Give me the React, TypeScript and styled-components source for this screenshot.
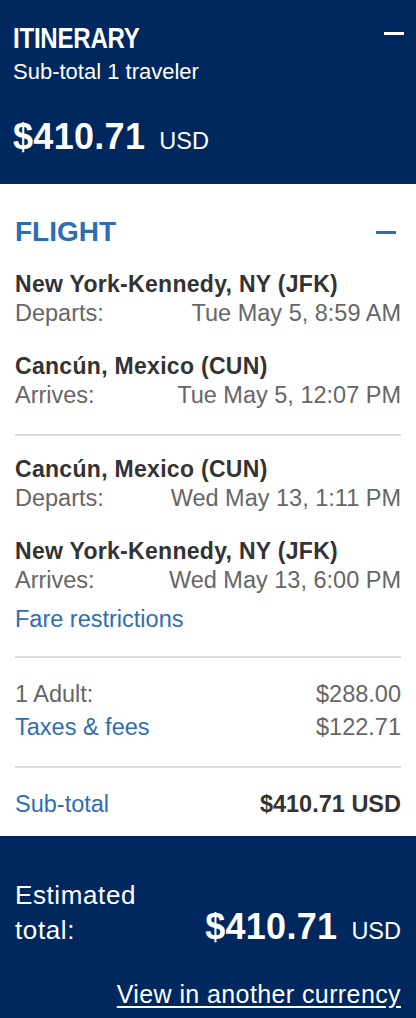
import React from 'react';
import styled, { createGlobalStyle } from 'styled-components';

const navy = '#00285e';
const blue = '#2f6db3';

const GlobalStyle = createGlobalStyle`
	html, body {
		margin: 0;
		padding: 0;
		background: #ffffff;
		font-family: 'Liberation Sans', Arial, sans-serif;
	}
	* {
		box-sizing: border-box;
	}
`;

const Page = styled.div`
	width: 416px;
	min-height: 1018px;
	display: flex;
	flex-direction: column;
	background: #ffffff;
`;

const Header = styled.header`
	background: ${navy};
	color: #ffffff;
	height: 184px;
	padding: 22px 12px 0 13px;
`;

const HeaderTop = styled.div`
	display: flex;
	justify-content: space-between;
	align-items: flex-start;
`;

// the original uses a condensed bold face, squeeze the regular one
const Title = styled.h1`
	margin: 0;
	font-size: 29px;
	line-height: 32px;
	font-weight: 700;
	letter-spacing: -0.3px;
	transform: scaleX(0.83);
	transform-origin: left center;
`;

const Minus = styled.span<{ $light?: boolean }>`
	display: block;
	width: 20px;
	height: 3px;
	margin-top: ${({ $light }) => ($light ? '10px' : '17px')};
	margin-right: ${({ $light }) => ($light ? '0' : '5px')};
	background: ${({ $light }) => ($light ? '#ffffff' : blue)};
`;

const SubTitle = styled.div`
	margin-top: 4px;
	font-size: 22px;
	line-height: 28px;
`;

const Price = styled.div`
	display: flex;
	align-items: baseline;
	gap: 14px;
	line-height: 40px;
`;

const HeaderPrice = styled(Price)`
	margin-top: 31px;
`;

const BigAmount = styled.span`
	font-size: 36px;
	font-weight: 700;
	letter-spacing: 0.3px;
`;

const Currency = styled.span`
	font-size: 23.5px;
`;

const Body = styled.section`
	padding: 30px 15px 0;
	flex: 1;
`;

const SectionHead = styled.div`
	display: flex;
	justify-content: space-between;
	align-items: flex-start;
	margin-bottom: 20px;
`;

const SectionTitle = styled.h2`
	margin: 0;
	color: ${blue};
	font-size: 28px;
	line-height: 36px;
	font-weight: 700;
`;

const Stop = styled.div`
	& + & {
		margin-top: 24px;
	}
`;

const Place = styled.div`
	color: #333333;
	font-size: 23px;
	line-height: 28px;
	font-weight: 700;
	letter-spacing: 0.3px;
`;

const Row = styled.div`
	display: flex;
	justify-content: space-between;
	font-size: 23.5px;
	line-height: 30px;
	color: #666666;
`;

const LinkText = styled.span`
	color: ${blue};
`;

const Divider = styled.hr<{ $top: number }>`
	margin: ${({ $top }) => $top}px 0 0;
	border: none;
	border-top: 2px solid #dddddd;
`;

const Leg = styled.div<{ $top: number }>`
	margin-top: ${({ $top }) => $top}px;
`;

const FareLink = styled.div`
	margin-top: 9px;
	color: ${blue};
	font-size: 23.5px;
	line-height: 30px;
`;

const Costs = styled.div`
	padding-top: 21px;
	display: flex;
	flex-direction: column;
	gap: 3px;
`;

const SubtotalRow = styled(Row)`
	margin-top: 21px;
`;

const Strong = styled.span`
	color: #333333;
	font-weight: 700;
`;

const Footer = styled.footer`
	background: ${navy};
	color: #ffffff;
	height: 182px;
	padding: 42px 15px 0;
`;

const TotalRow = styled.div`
	display: flex;
	justify-content: space-between;
	align-items: last baseline;
`;

const TotalLabel = styled.div`
	font-size: 26px;
	line-height: 35px;
	width: 130px;
	letter-spacing: 0.6px;
`;

const CurrencyLink = styled.a`
	display: block;
	text-align: right;
	color: #ffffff;
	font-size: 25px;
	line-height: 30px;
	margin-top: 28px;
	text-decoration: underline;
	text-underline-offset: 3px;
	letter-spacing: 0.4px;
`;

type LegInfo = {
	from: string;
	to: string;
	depart: string;
	arrive: string;
};

const legs: LegInfo[] = [
	{
		from: 'New York-Kennedy, NY (JFK)',
		to: 'Cancún, Mexico (CUN)',
		depart: 'Tue May 5, 8:59 AM',
		arrive: 'Tue May 5, 12:07 PM',
	},
	{
		from: 'Cancún, Mexico (CUN)',
		to: 'New York-Kennedy, NY (JFK)',
		depart: 'Wed May 13, 1:11 PM',
		arrive: 'Wed May 13, 6:00 PM',
	},
];

const App = () => {
	return (
		<Page>
			<GlobalStyle />
			<Header>
				<HeaderTop>
					<Title>ITINERARY</Title>
					<Minus $light />
				</HeaderTop>
				<SubTitle>Sub-total 1 traveler</SubTitle>
				<HeaderPrice>
					<BigAmount>$410.71</BigAmount>
					<Currency>USD</Currency>
				</HeaderPrice>
			</Header>
			<Body>
				<SectionHead>
					<SectionTitle>FLIGHT</SectionTitle>
					<Minus />
				</SectionHead>
				{legs.map((leg, i) => (
					<React.Fragment key={i}>
						{i > 0 && <Divider $top={24} />}
						<Leg $top={i === 0 ? 0 : 19}>
							<Stop>
								<Place>{leg.from}</Place>
								<Row>
									<span>Departs:</span>
									<span>{leg.depart}</span>
								</Row>
							</Stop>
							<Stop>
								<Place>{leg.to}</Place>
								<Row>
									<span>Arrives:</span>
									<span>{leg.arrive}</span>
								</Row>
							</Stop>
						</Leg>
					</React.Fragment>
				))}
				<FareLink>Fare restrictions</FareLink>
				<Divider $top={22} />
				<Costs>
					<Row>
						<span>1 Adult:</span>
						<span>$288.00</span>
					</Row>
					<Row>
						<LinkText>Taxes &amp; fees</LinkText>
						<span>$122.71</span>
					</Row>
				</Costs>
				<Divider $top={24} />
				<SubtotalRow>
					<LinkText>Sub-total</LinkText>
					<Strong>$410.71 USD</Strong>
				</SubtotalRow>
			</Body>
			<Footer>
				<TotalRow>
					<TotalLabel>Estimated total:</TotalLabel>
					<Price>
						<BigAmount>$410.71</BigAmount>
						<Currency>USD</Currency>
					</Price>
				</TotalRow>
				<CurrencyLink href="#">View in another currency</CurrencyLink>
			</Footer>
		</Page>
	);
};

export default App;
